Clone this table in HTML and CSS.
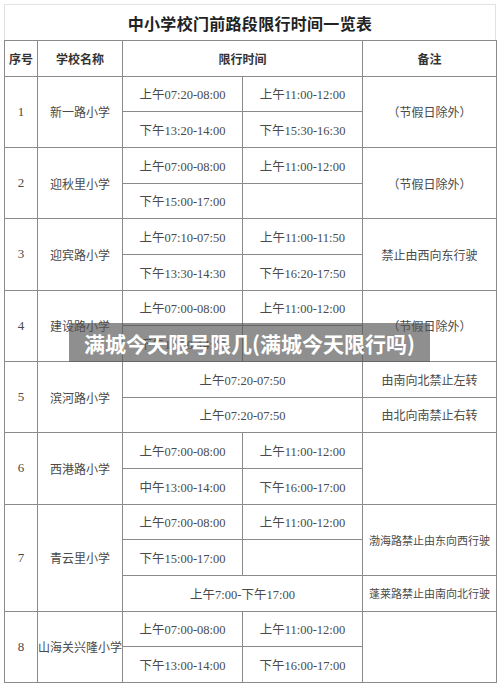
FILE: index.html
```html
<!DOCTYPE html>
<html lang="zh">
<head>
<meta charset="utf-8">
<link rel="stylesheet" href="styles.css">
</head>
<body>
<div class="page">
  <div class="title">中小学校门前路段限行时间一览表</div>
  <table class="sheet">
    <colgroup>
      <col class="c-no"><col class="c-name"><col class="c-t"><col class="c-t"><col class="c-note">
    </colgroup>
    <tr class="head">
      <td>序号</td><td>学校名称</td><td colspan="2">限行时间</td><td>备注</td>
    </tr>
    <tr><td rowspan="2" class="num">1</td><td rowspan="2" class="name">新一路小学</td><td>上午07:20-08:00</td><td>上午11:00-12:00</td><td rowspan="2" class="note">（节假日除外）</td></tr>
    <tr><td>下午13:20-14:00</td><td>下午15:30-16:30</td></tr>
    <tr><td rowspan="2" class="num">2</td><td rowspan="2" class="name">迎秋里小学</td><td>上午07:00-08:00</td><td>上午11:00-12:00</td><td rowspan="2" class="note">（节假日除外）</td></tr>
    <tr><td>下午15:00-17:00</td><td></td></tr>
    <tr><td rowspan="2" class="num">3</td><td rowspan="2" class="name">迎宾路小学</td><td>上午07:10-07:50</td><td>上午11:00-11:50</td><td rowspan="2" class="note">禁止由西向东行驶</td></tr>
    <tr><td>下午13:30-14:30</td><td>下午16:20-17:50</td></tr>
    <tr><td rowspan="2" class="num">4</td><td rowspan="2" class="name">建设路小学</td><td>上午07:00-08:00</td><td>上午11:00-12:00</td><td rowspan="2" class="note">（节假日除外）</td></tr>
    <tr><td>下午13:30-14:30</td><td></td></tr>
    <tr><td rowspan="2" class="num">5</td><td rowspan="2" class="name">滨河路小学</td><td colspan="2">上午07:20-07:50</td><td class="note">由南向北禁止左转</td></tr>
    <tr><td colspan="2">上午07:20-07:50</td><td class="note">由北向南禁止右转</td></tr>
    <tr><td rowspan="2" class="num">6</td><td rowspan="2" class="name">西港路小学</td><td>上午07:00-08:00</td><td>上午11:00-12:00</td><td rowspan="2" class="note"></td></tr>
    <tr><td>中午13:00-14:00</td><td>下午16:00-17:00</td></tr>
    <tr><td rowspan="3" class="num">7</td><td rowspan="3" class="name">青云里小学</td><td>上午07:00-08:00</td><td>上午11:00-12:00</td><td rowspan="2" class="note small">渤海路禁止由东向西行驶</td></tr>
    <tr><td>下午15:00-17:00</td><td></td></tr>
    <tr><td colspan="2">上午7:00-下午17:00</td><td class="note small">蓬莱路禁止由南向北行驶</td></tr>
    <tr><td rowspan="2" class="num">8</td><td rowspan="2" class="name wide">山海关兴隆小学</td><td>上午07:00-08:00</td><td>上午11:00-12:00</td><td rowspan="2" class="note"></td></tr>
    <tr><td>下午13:00-14:00</td><td>下午16:00-17:00</td></tr>
  </table>
  <div class="banner">满城今天限号限几(满城今天限行吗)</div>
</div>
</body>
</html>
```
FILE: styles.css
```css
html, body {
  margin: 0;
  padding: 0;
  background: #fff;
}
.page {
  position: relative;
  width: 500px;
  height: 687px;
  padding: 4px 4px 0 4px;
  box-sizing: border-box;
}
.title {
  height: 36px;
  box-sizing: border-box;
  border: 1px solid #e2e2e2;
  border-bottom: none;
  display: flex;
  align-items: center;
  justify-content: center;
  font-family: "Noto Sans CJK SC", sans-serif;
  font-weight: 700;
  font-size: 16px;
  color: #222;
  letter-spacing: 0.3px;
}
.sheet {
  width: 492px;
  table-layout: fixed;
  border-collapse: collapse;
  font-family: "Liberation Serif", "Noto Sans CJK SC", serif;
  font-size: 12.5px;
  color: #4a4a4a;
}
.c-no { width: 33px; }
.c-name { width: 85px; }
.c-t { width: 120px; }
.c-note { width: 134px; }
.sheet tr {
  height: 35.67px;
}
.sheet td {
  border: 1px solid #8a8a8a;
  padding: 0;
  text-align: center;
  vertical-align: middle;
  white-space: nowrap;
}
.sheet .head td {
  font-family: "Noto Sans CJK SC", sans-serif;
  font-weight: 700;
  font-size: 12px;
  color: #333;
}
.sheet .name {
  font-family: "Noto Sans CJK SC", sans-serif;
  font-size: 12px;
}
.sheet .name.wide {
  text-align: left;
  overflow: visible;
}
.sheet .note {
  font-family: "Noto Sans CJK SC", sans-serif;
  font-size: 12px;
}
.sheet .note.small {
  font-size: 11px;
}
.sheet .num {
  font-size: 13px;
}
.banner {
  position: absolute;
  left: 69px;
  top: 323px;
  width: 361px;
  height: 39px;
  background: rgba(85, 85, 85, 0.66);
  color: #fff;
  font-family: "Noto Sans CJK SC", sans-serif;
  font-weight: 700;
  font-size: 21px;
  display: flex;
  align-items: center;
  justify-content: center;
  white-space: nowrap;
}
```
